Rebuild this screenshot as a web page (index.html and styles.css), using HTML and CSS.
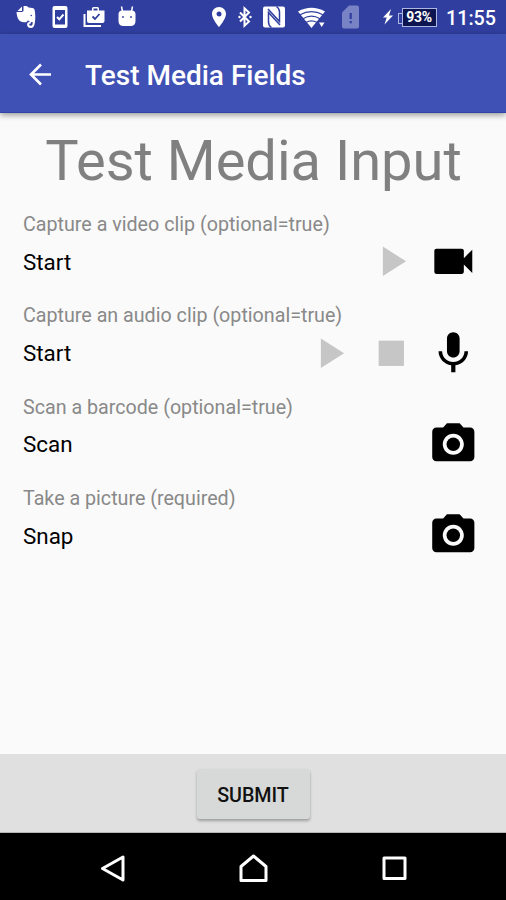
FILE: index.html
```html
<!DOCTYPE html>
<html lang="en">
<head>
    <meta charset="UTF-8">
    <meta name="viewport" content="width=device-width, initial-scale=1.0">
    <title>Test Media Fields</title>
    <link rel="stylesheet" href="styles.css">
</head>
<body>
    <div class="status-bar">
        <div class="notifications">
            <svg width="22" height="24" viewBox="0 0 22 24">
                <path fill="#fff" d="M7 1.500v4.500H2.500zM8.500 1.200C11 .8 13 1.500 13.500 2.500c3 .2 5.500.5 6 2 .8 3 1 7 .6 11-.3 4-1.100 7.500-4 7.500-3 0-4-1.800-4-3.500 0-2 1.500-3 3.800-2.800v1.800c-1.200-.1-1.700.4-1.700 1.100 0 .8.7 1.200 1.700 1.200 1.500 0 1.800-1.500 1.800-3.800-2 .4-4-.2-4.700-2-.6 2-2 2.600-4 2.300C4 16.800 2.200 14 1.500 7h5.300c1.200 0 1.700-.6 1.700-1.700z"/>
                <circle cx="16.300" cy="10.500" r=".8" fill="#303f9f"/>
            </svg>
            <svg width="18" height="24" viewBox="0 0 18 24">
                <rect x="1.500" y="1" width="15" height="22" rx="2" fill="#fff"/>
                <path fill="#303f9f" d="M4 5h10v14.500H4z"/>
                <path fill="none" stroke="#fff" stroke-width="2" d="M6 12l2.300 2.300L12.500 9.500"/>
            </svg>
            <svg width="24" height="24" viewBox="0 0 24 24">
                <path fill="none" stroke="#fff" stroke-width="2" d="M2.500 9v12H19"/>
                <path fill="#fff" d="M5 5.500h5V3.500Q10 2 11.500 2h4Q17 2 17 3.500v2h5.500V16q0 2-2 2H7q-2 0-2-2z"/>
                <path fill="#303f9f" d="M11.500 3.500h4v2h-4z"/>
                <path fill="none" stroke="#303f9f" stroke-width="1.800" d="M10.500 11.500l2.500 2.500 4.500-5"/>
            </svg>
            <svg width="20" height="24" viewBox="0 0 20 24">
                <path fill="#fff" d="M1.500 9.500Q1.500 5.500 5.500 5.500h9Q18.500 5.500 18.500 9.500V16q0 5-5 5H6.500q-5 0-5-5z"/>
                <path stroke="#fff" stroke-width="1.500" d="M4.500 1.500l1 5M15.500 1.500l-1 5"/>
                <circle cx="6" cy="12" r=".9" fill="#303f9f"/>
                <circle cx="14" cy="12" r=".9" fill="#303f9f"/>
            </svg>
        </div>
        <div class="system">
            <svg class="pin" width="16" height="24" viewBox="0 0 16 24">
                <path fill="#fff" fill-rule="evenodd" d="M8 2C4.100 2 1 5 1 9c0 5 7 13 7 13s7-8 7-13c0-4-3.100-7-7-7zm0 4.500a2.500 2.500 0 1 1 0 5 2.500 2.500 0 0 1 0-5z"/>
            </svg>
            <svg class="bluetooth" width="14" height="24" viewBox="0 0 14 24">
                <path fill="none" stroke="#fff" stroke-width="2" d="M2 7.500l9 9-4.500 4.200V3.300L11 7.500l-9 9"/>
                <circle cx="1.500" cy="12" r="1.200" fill="#fff"/>
                <circle cx="12.500" cy="12" r="1.200" fill="#fff"/>
            </svg>
            <svg class="nfc" width="22" height="24" viewBox="0 0 22 24">
                <rect y="1.500" width="22" height="21" rx="2" fill="#fff"/>
                <path fill="none" stroke="#303f9f" stroke-width="1.500" d="M8.500 22.500Q5.500 20.500 5.500 17V7.500L17 20M13.500 1.500Q16.500 3.500 16.500 7v9.500L5 4"/>
            </svg>
            <svg class="wifi" width="28" height="24" viewBox="0 0 28 24">
                <path fill="#fff" d="M0 6.500Q13.500-1 27 6.500L13.500 23z"/>
                <path fill="none" stroke="#303f9f" stroke-width="1.200" d="M2 9.800q11.500-6.500 23 0M5 13.700q8.500-5 17 0M8.200 17.300q5.300-3 10.600 0"/>
                <path fill="#303f9f" d="M19.500 16h8v8h-8z"/>
                <path fill="#fff" d="M21 17.500h5.500L23.700 22z"/>
            </svg>
            <svg class="sim" width="18" height="24" viewBox="0 0 18 24">
                <path fill="#7883c5" d="M7 .5h8q2 0 2 2v19q0 2-2 2H2q-2 0-2-2V7.500z"/>
                <path stroke="#303f9f" stroke-width="2.200" d="M8.700 8v6M8.700 16v2.200"/>
            </svg>
            <svg class="charge" width="12" height="24" viewBox="0 0 12 24">
                <path fill="#fff" d="M9 4L1 12.500h3.700L2.500 19.500 11 10.500H7z"/>
            </svg>
            <div class="battery"><span>93%</span></div>
            <span class="time">11:55</span>
        </div>
    </div>

    <div class="app-bar">
        <svg width="24" height="24" viewBox="0 0 24 24">
            <path fill="none" stroke="#fff" stroke-width="2.600" d="M24.500 11.500H4M14 1.500L4 11.500l10 10"/>
        </svg>
        <h1>Test Media Fields</h1>
    </div>

    <div class="content">
        <h2>Test Media Input</h2>

        <div class="field">
            <div class="label">Capture a video clip (optional=true)</div>
            <div class="row">
                <span class="value">Start</span>
                <svg class="icon disabled" viewBox="0 0 24 24"><path d="M8 5v14l11-7z"/></svg>
                <svg class="icon" viewBox="0 0 24 24"><path d="M17 10.500V7c0-.55-.45-1-1-1H4c-.55 0-1 .45-1 1v10c0 .55.45 1 1 1h12c.55 0 1-.45 1-1v-3.500l4 4v-11z"/></svg>
            </div>
        </div>

        <div class="field">
            <div class="label">Capture an audio clip (optional=true)</div>
            <div class="row">
                <span class="value">Start</span>
                <svg class="icon disabled" viewBox="0 0 24 24"><path d="M8 5v14l11-7z"/></svg>
                <svg class="icon disabled" viewBox="0 0 24 24"><path d="M6 6h12v12H6z"/></svg>
                <svg class="icon" viewBox="0 0 24 24"><path d="M12 14c1.660 0 2.990-1.340 2.990-3L15 5c0-1.660-1.340-3-3-3S9 3.340 9 5v6c0 1.660 1.340 3 3 3zm5.300-3c0 3-2.540 5.100-5.300 5.100S6.700 14 6.700 11H5c0 3.410 2.720 6.230 6 6.720V21h2v-3.280c3.280-.48 6-3.300 6-6.720h-1.700z"/></svg>
            </div>
        </div>

        <div class="field">
            <div class="label">Scan a barcode (optional=true)</div>
            <div class="row">
                <span class="value">Scan</span>
                <svg class="icon" viewBox="0 0 24 24"><circle cx="12" cy="12" r="3.200"/><path d="M9 2L7.170 4H4c-1.100 0-2 .9-2 2v12c0 1.100.9 2 2 2h16c1.100 0 2-.9 2-2V6c0-1.100-.9-2-2-2h-3.170L15 2H9zm3 15c-2.760 0-5-2.240-5-5s2.240-5 5-5 5 2.240 5 5-2.240 5-5 5z"/></svg>
            </div>
        </div>

        <div class="field">
            <div class="label">Take a picture (required)</div>
            <div class="row">
                <span class="value">Snap</span>
                <svg class="icon" viewBox="0 0 24 24"><circle cx="12" cy="12" r="3.200"/><path d="M9 2L7.170 4H4c-1.100 0-2 .9-2 2v12c0 1.100.9 2 2 2h16c1.100 0 2-.9 2-2V6c0-1.100-.9-2-2-2h-3.170L15 2H9zm3 15c-2.760 0-5-2.240-5-5s2.240-5 5-5 5 2.240 5 5-2.240 5-5 5z"/></svg>
            </div>
        </div>
    </div>

    <div class="footer">
        <button>SUBMIT</button>
    </div>

    <div class="nav-bar">
        <svg width="32" height="32" viewBox="0 0 32 32"><path d="M27 5v23L6.500 16.500z"/></svg>
        <svg width="32" height="32" viewBox="0 0 32 32"><path d="M16.500 4L29 14.500v14H4v-14z"/></svg>
        <svg width="32" height="32" viewBox="0 0 32 32"><rect x="6" y="6" width="21" height="20.500"/></svg>
    </div>
</body>
</html>
```
FILE: styles.css
```css
* {
    box-sizing: border-box;
}
body {
    font-family: Roboto, sans-serif;
    background-color: #fafafa;
    margin: 0;
    height: 900px;
    display: flex;
    flex-direction: column;
    overflow: hidden;
}
svg {
    flex-shrink: 0;
}
.status-bar {
    height: 34px;
    background: #303f9f;
    display: flex;
    justify-content: space-between;
    align-items: center;
    padding: 0 10px 0 15px;
}
.notifications {
    display: flex;
    gap: 13.500px;
}
.notifications svg:nth-child(3) {
    margin-right: -2.500px;
}
.system {
    display: flex;
    align-items: center;
}
.bluetooth {
    margin-left: 11px;
}
.nfc {
    margin-left: 11px;
}
.wifi {
    margin-left: 13px;
}
.sim {
    margin-left: 16px;
}
.charge {
    margin-left: 22px;
}
.battery {
    position: relative;
    width: 35px;
    height: 19px;
    margin-left: 8px;
    border: 1.500px solid #aeb6e3;
    background: #0d1550;
    color: #fff;
    font-size: 14px;
    font-weight: 700;
    line-height: 17px;
    text-align: center;
    letter-spacing: -0.300px;
}
.battery::before {
    content: "";
    position: absolute;
    left: -5px;
    top: 4px;
    width: 4px;
    height: 9px;
    border: 1px solid #aeb6e3;
    border-right: none;
}
.time {
    margin: 3px 0 0 9.500px;
    color: #fff;
    font-size: 19.700px;
    font-weight: 500;
    line-height: 24px;
}
.app-bar {
    height: 79px;
    background: #3f51b5;
    border-bottom: 1px solid #3143a8;
    display: flex;
    align-items: center;
    padding: 3px 27px 0;
    box-shadow: 0 2px 6px rgba(0, 0, 0, 0.4);
    z-index: 1;
}
.app-bar svg {
    margin-left: -0.500px;
}
h1 {
    margin: 2px 0 0 34.500px;
    color: #fff;
    font-size: 28px;
    font-weight: 500;
}
.content {
    flex: 1;
    padding: 14px 22px 0 23px;
}
h2 {
    margin: 0 0 17px;
    color: #808080;
    font-size: 56px;
    font-weight: 400;
    line-height: 68px;
    text-align: center;
}
.field {
    height: 91.400px;
}
.label {
    color: #898989;
    font-size: 19.680px;
    line-height: 26px;
}
.row {
    display: flex;
    align-items: center;
    gap: 11.300px;
    height: 51px;
    margin: -2px 5.300px 0 0;
}
.value {
    flex: 1;
    color: #000;
    font-size: 22.400px;
}
.icon {
    width: 50.600px;
    height: 50.600px;
    fill: #000;
}
.icon.disabled {
    fill: #c6c6c6;
}
.footer {
    height: 79px;
    background: #e0e0e0;
    border-bottom: 1px solid #b5b5b5;
    display: flex;
    justify-content: center;
    align-items: center;
    padding-top: 1px;
}
button {
    width: 113px;
    height: 50px;
    background: #d6d9d8;
    color: #111;
    border: none;
    border-radius: 3px;
    box-shadow: 0 2px 3px rgba(0, 0, 0, 0.3);
    font-family: Roboto, sans-serif;
    font-size: 19.700px;
    font-weight: 500;
    padding: 3px 0 0;
}
.nav-bar {
    height: 67px;
    background: #000;
    display: flex;
    justify-content: center;
    align-items: center;
    gap: 109px;
    padding-top: 3px;
}
.nav-bar svg {
    fill: none;
    stroke: #fff;
    stroke-width: 3;
    stroke-linejoin: round;
}
```
